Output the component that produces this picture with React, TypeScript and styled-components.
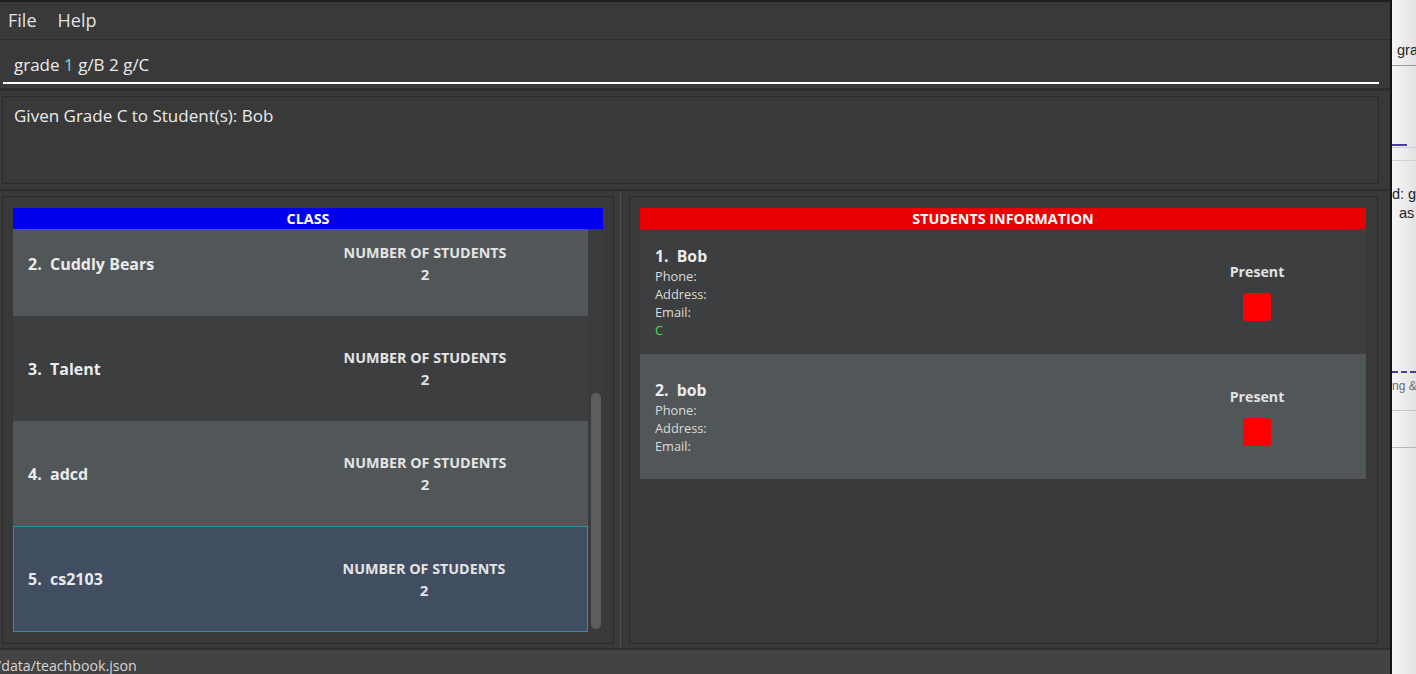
import React from "react";
import styled, { createGlobalStyle } from "styled-components";

const Global = createGlobalStyle`
  html, body { margin: 0; padding: 0; background: #393939; overflow: hidden; }
  body { font-family: "Open Sans", "DejaVu Sans", sans-serif; }
  * { box-sizing: border-box; }
`;

const Page = styled.div`
  display: flex;
  width: 1416px;
  height: 674px;
`;

const Window = styled.div`
  width: 1390px;
  height: 674px;
  display: flex;
  flex-direction: column;
  background: #393939;
  border-top: 2px solid #1e1e1e;
`;

const MenuBar = styled.div`
  height: 38px;
  display: flex;
  align-items: center;
  gap: 21px;
  padding: 0 0 1px 8px;
  border-bottom: 1px solid #2c2c2c;
  font-size: 18px;
  color: #e2e2e2;
`;

const MenuItem = styled.span``;

const CommandArea = styled.div`
  height: 48px;
  padding: 0 11px 4px 3px;
`;

const CommandField = styled.div`
  height: 44px;
  display: flex;
  align-items: center;
  padding: 6px 0 0 11px;
  border-bottom: 2px solid #ffffff;
  font-size: 17px;
  color: #ececec;
  white-space: pre;
`;

const Accent = styled.span`
  color: #6fdbe8;
`;

const Band = styled.div<{ $h: number }>`
  height: ${(p) => p.$h}px;
  background: #2d2d2d;
`;

const ResultArea = styled.div`
  padding: 5px 11px 5px 2px;
`;

const ResultBox = styled.div`
  height: 88px;
  border: 1px solid #2a2a2a;
  padding: 7px 11px;
  font-size: 17px;
  color: #ececec;
`;

const Panels = styled.div`
  flex: 1;
  display: flex;
  padding: 5px 12px 4px 2px;
`;

const Panel = styled.div<{ $w: number; $pr: number }>`
  width: ${(p) => p.$w}px;
  display: flex;
  flex-direction: column;
  border: 1px solid #2a2a2a;
  padding: 11px ${(p) => p.$pr}px 11px 10px;
`;

const Divider = styled.div`
  width: 15px;
  display: flex;
  justify-content: center;
  margin: -5px 0 -4px;
  &::before {
    content: "";
    width: 1px;
    margin-left: -2px;
    background: #4e4e4e;
  }
`;

const Header = styled.div<{ $bg: string }>`
  height: 21px;
  background: ${(p) => p.$bg};
  color: #ffffff;
  font-weight: 700;
  font-size: 14.3px;
  display: flex;
  align-items: center;
  justify-content: center;
`;

const ListRow = styled.div`
  flex: 1;
  display: flex;
  min-height: 0;
`;

const Viewport = styled.div`
  width: 575px;
  overflow: hidden;
`;

const ListInner = styled.div`
  margin-top: -18px;
`;

const ClassCell = styled.div<{ $variant: "odd" | "even" | "sel" }>`
  height: 105px;
  display: grid;
  grid-template-columns: 1fr 200px;
  align-items: center;
  padding: 0 63px 0 15px;
  color: #ebebeb;
  background: ${(p) =>
    p.$variant === "odd" ? "#515658" : p.$variant === "even" ? "#3c3e40" : "#414d61"};
  border: ${(p) => (p.$variant === "sel" ? "1px solid #2f8fae" : "none")};
  ${(p) => (p.$variant === "sel" ? "padding-left: 14px; height: 106px;" : "")}
`;

const CellName = styled.div`
  font-weight: 700;
  font-size: 16px;
  white-space: pre;
`;

const Stats = styled.div`
  display: flex;
  flex-direction: column;
  align-items: center;
  font-weight: 700;
  color: #e4e4e4;
`;

const StatsLabel = styled.div`
  font-size: 14.3px;
  line-height: 21px;
`;

const StatsValue = styled.div`
  font-size: 15px;
  line-height: 22px;
`;

const Track = styled.div`
  width: 15px;
  background: #3a3b3c;
  display: flex;
  justify-content: center;
`;

const Thumb = styled.div`
  width: 10px;
  height: 236px;
  margin-top: 164px;
  border-radius: 5px;
  background: #5d5d5d;
`;

const StudentCard = styled.div<{ $odd: boolean }>`
  height: 125px;
  display: flex;
  align-items: center;
  padding-left: 15px;
  background: ${(p) => (p.$odd ? "#3c3e40" : "#515658")};
  color: #e4e4e4;
`;

const Info = styled.div`
  flex: 1;
  display: flex;
  flex-direction: column;
`;

const StudentName = styled.div`
  font-weight: 700;
  font-size: 15.8px;
  line-height: 22px;
  white-space: pre;
  color: #ececec;
`;

const Field = styled.div<{ $green?: boolean }>`
  font-size: 12.8px;
  line-height: 18px;
  color: ${(p) => (p.$green ? "#45e045" : "#dcdcdc")};
`;

const PresentBox = styled.div`
  width: 100px;
  margin-right: 59px;
  display: flex;
  flex-direction: column;
  align-items: center;
  gap: 11px;
`;

const PresentLabel = styled.div`
  font-weight: 700;
  font-size: 14.2px;
  line-height: 20px;
  color: #e2e2e2;
`;

const Square = styled.div`
  width: 28px;
  height: 28px;
  border-radius: 3px;
  background: #ff0000;
`;

const StatusBar = styled.div`
  height: 26px;
  background: #434343;
  border-top: 2px solid #2e2e2e;
  display: flex;
  align-items: center;
  padding: 7px 0 0 0;
  font-size: 14.2px;
  color: #d6d6d6;
  overflow: hidden;
`;

const StatusText = styled.span`
  margin-left: -4px;
  white-space: nowrap;
`;

const Side = styled.div`
  flex: 1;
  display: flex;
  flex-direction: column;
  border-left: 2px solid #151515;
  background: linear-gradient(to right, #f6f6f6, #e2e2e2);
  overflow: hidden;
  white-space: nowrap;
  font-family: "Liberation Sans", Arial, sans-serif;
`;

const SideText = styled.div<{ $top: number; $pl: number; $small?: boolean }>`
  margin-top: ${(p) => p.$top}px;
  padding-left: ${(p) => p.$pl}px;
  font-size: ${(p) => (p.$small ? 12 : 14.5)}px;
  line-height: 16px;
  color: ${(p) => (p.$small ? "#6a6a6a" : "#1e1e1e")};
`;

const SideLine = styled.div<{ $top: number; $color: string; $w?: number; $h?: number; $dashed?: boolean }>`
  margin-top: ${(p) => p.$top}px;
  width: ${(p) => (p.$w ? `${p.$w}px` : "100%")};
  height: 0;
  border-top: ${(p) => p.$h ?? 1}px ${(p) => (p.$dashed ? "dashed" : "solid")} ${(p) => p.$color};
`;

const classes = [
  { n: 2, name: "Cuddly Bears", v: "odd" as const },
  { n: 3, name: "Talent", v: "even" as const },
  { n: 4, name: "adcd", v: "odd" as const },
  { n: 5, name: "cs2103", v: "sel" as const },
];

const students = [
  { n: 1, name: "Bob", grade: "C" },
  { n: 2, name: "bob", grade: "" },
];

export default function App() {
  return (
    <>
      <Global />
      <Page>
        <Window>
          <MenuBar>
            <MenuItem>File</MenuItem>
            <MenuItem>Help</MenuItem>
          </MenuBar>
          <CommandArea>
            <CommandField>
              grade <Accent>1</Accent> g/B 2 g/C
            </CommandField>
          </CommandArea>
          <Band $h={3} />
          <ResultArea>
            <ResultBox>Given Grade C to Student(s): Bob</ResultBox>
          </ResultArea>
          <Band $h={2} />
          <Panels>
            <Panel $w={612} $pr={10}>
              <Header $bg="#0000ee">CLASS</Header>
              <ListRow>
                <Viewport>
                  <ListInner>
                    {classes.map((c) => (
                      <ClassCell key={c.n} $variant={c.v}>
                        <CellName>{`${c.n}.  ${c.name}`}</CellName>
                        <Stats>
                          <StatsLabel>NUMBER OF STUDENTS</StatsLabel>
                          <StatsValue>2</StatsValue>
                        </Stats>
                      </ClassCell>
                    ))}
                  </ListInner>
                </Viewport>
                <Track>
                  <Thumb />
                </Track>
              </ListRow>
            </Panel>
            <Divider />
            <Panel $w={749} $pr={11}>
              <Header $bg="#e80000">STUDENTS INFORMATION</Header>
              {students.map((s, i) => (
                <StudentCard key={s.n} $odd={i % 2 === 0}>
                  <Info>
                    <StudentName>{`${s.n}.  ${s.name}`}</StudentName>
                    <Field>Phone:</Field>
                    <Field>Address:</Field>
                    <Field>Email:</Field>
                    {s.grade && <Field $green>{s.grade}</Field>}
                  </Info>
                  <PresentBox>
                    <PresentLabel>Present</PresentLabel>
                    <Square />
                  </PresentBox>
                </StudentCard>
              ))}
            </Panel>
          </Panels>
          <StatusBar>
            <StatusText>/data/teachbook.json</StatusText>
          </StatusBar>
        </Window>
        <Side>
          <SideText $top={42} $pl={5}>gra</SideText>
          <SideLine $top={7} $color="#9a9a9a" />
          <SideLine $top={78} $color="#4b3f9c" $w={15} $h={2} />
          <SideLine $top={1} $color="#cfcfcf" />
          <SideLine $top={12} $color="#d2d2d2" />
          <SideText $top={25} $pl={0}>d: gr</SideText>
          <SideText $top={3} $pl={7}>as</SideText>
          <SideLine $top={150} $color="#4b3f9c" $h={2} $dashed />
          <SideText $top={5} $pl={0} $small>ng &amp;</SideText>
          <SideLine $top={16} $color="#c8c8c8" />
          <SideLine $top={36} $color="#b8b8b8" />
        </Side>
      </Page>
    </>
  );
}
